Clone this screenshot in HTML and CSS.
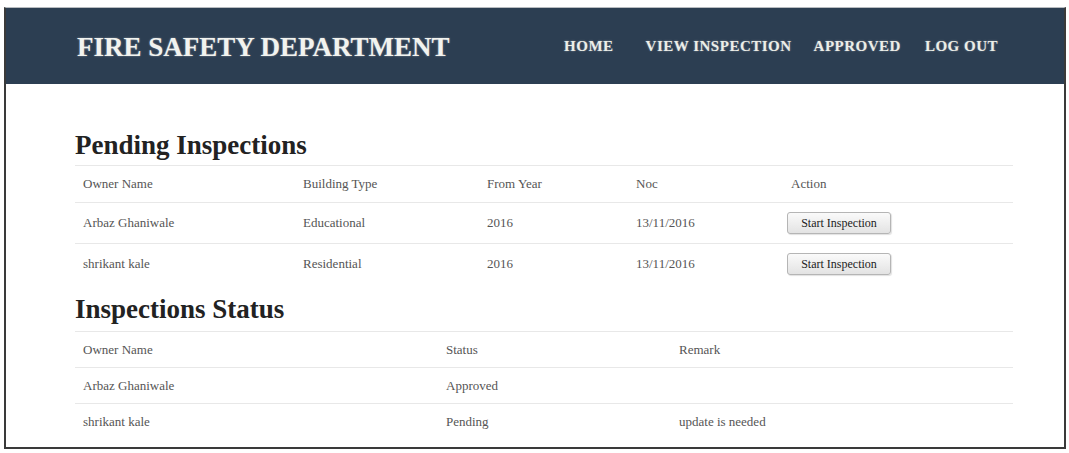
FILE: index.html
```html
<!DOCTYPE html>
<html>
<head>
<meta charset="utf-8">
<title>Fire Safety Department</title>
<link rel="stylesheet" href="styles.css">
</head>
<body>
<div class="frame">
  <header class="topbar">
    <div class="brand">FIRE SAFETY DEPARTMENT</div>
    <nav class="nav">
      <a class="nav-home">HOME</a>
      <a class="nav-view">VIEW INSPECTION</a>
      <a class="nav-appr">APPROVED</a>
      <a class="nav-out">LOG OUT</a>
    </nav>
  </header>
  <main class="content">
    <h2 class="title first">Pending Inspections</h2>
    <table class="grid pending">
      <colgroup>
        <col class="c1"><col class="c2"><col class="c3"><col class="c4"><col class="c5">
      </colgroup>
      <tr><td>Owner Name</td><td>Building Type</td><td>From Year</td><td>Noc</td><td>Action</td></tr>
      <tr class="btnrow"><td>Arbaz Ghaniwale</td><td>Educational</td><td>2016</td><td>13/11/2016</td><td><button class="btn">Start Inspection</button></td></tr>
      <tr class="btnrow"><td>shrikant kale</td><td>Residential</td><td>2016</td><td>13/11/2016</td><td><button class="btn">Start Inspection</button></td></tr>
    </table>
    <h2 class="title second">Inspections Status</h2>
    <table class="grid status">
      <colgroup>
        <col class="s1"><col class="s2"><col class="s3">
      </colgroup>
      <tr><td>Owner Name</td><td>Status</td><td>Remark</td></tr>
      <tr><td>Arbaz Ghaniwale</td><td>Approved</td><td></td></tr>
      <tr><td>shrikant kale</td><td>Pending</td><td>update is needed</td></tr>
    </table>
  </main>
</div>
</body>
</html>
```
FILE: styles.css
```css
html, body {
  margin: 0;
  padding: 0;
  background: #ffffff;
}
body {
  font-family: "Liberation Serif", "Times New Roman", serif;
  color: #555;
}
.frame {
  margin: 7px 4px 0 4px;
  width: 1058px;
  height: 439px;
  border-left: 2px solid #3a3a3a;
  border-right: 2px solid #3a3a3a;
  border-bottom: 2px solid #3a3a3a;
  border-top: 1px solid #b8bcc0;
  display: flex;
  flex-direction: column;
  background: #fff;
}
.topbar {
  height: 76px;
  background: #2c3e52;
  display: flex;
  align-items: center;
  justify-content: space-between;
  padding: 0 66px 0 71px;
  flex-shrink: 0;
}
.brand {
  font-weight: bold;
  font-size: 27px;
  color: #f2f3ef;
  text-shadow: 0 0 2px rgba(255,255,255,0.45);
  padding-top: 3px;
}
.nav {
  display: flex;
  align-items: center;
  padding-top: 1px;
}
.nav a {
  font-weight: bold;
  font-size: 15px;
  letter-spacing: 0.5px;
  color: #eceee8;
  text-shadow: 0 0 2px rgba(255,255,255,0.4);
}
.nav-view { margin-left: 32px; }
.nav-appr { margin-left: 22px; }
.nav-out { margin-left: 24px; }
.content {
  padding: 0 50px 0 69px;
}
.title {
  margin: 0;
  font-size: 27px;
  line-height: 28px;
  font-weight: bold;
  color: #222;
}
.title.first { margin-top: 47px; margin-bottom: 6px; }
.title.second { margin-top: 11px; margin-bottom: 8px; }
.grid {
  width: 938px;
  border-collapse: collapse;
  table-layout: fixed;
  font-size: 13px;
}
.grid td {
  padding: 8px;
  line-height: 20px;
  border-top: 1px solid #e8e8e8;
  vertical-align: middle;
  color: #555;
}
.status td {
  line-height: 19px;
}
.c1 { width: 220px; }
.c2 { width: 184px; }
.c3 { width: 149px; }
.c4 { width: 155px; }
.c5 { width: 230px; }
.s1 { width: 363px; }
.s2 { width: 233px; }
.s3 { width: 342px; }
.btnrow td { padding-top: 9px; padding-bottom: 9px; }
.btn {
  font-family: "Liberation Serif", "Times New Roman", serif;
  font-size: 12px;
  color: #222;
  height: 22px;
  width: 104px;
  padding: 0 4px;
  margin-left: -4px;
  border: 1px solid #b5b5b5;
  border-radius: 3px;
  background: linear-gradient(#fafafa, #e3e3e3);
  box-shadow: 1px 1px 1px rgba(0,0,0,0.12);
}
```
